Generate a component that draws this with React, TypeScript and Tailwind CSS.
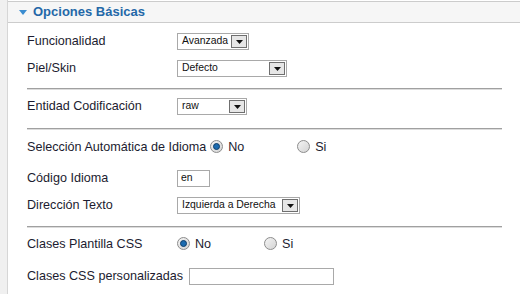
import React from "react";

const font = { fontFamily: '"Liberation Sans", Arial, sans-serif' };

function Select({ value, width }: { value: string; width: number }) {
  return (
    <div
      className="flex items-center justify-between h-[17px] border border-[#a9a9a9] bg-white pl-[4px] pr-[1px]"
      style={{ width }}
    >
      <span className="text-[10.4px] leading-none text-[#111]">{value}</span>
      <div className="w-[16px] h-[13px] border border-[#6f6f6f] bg-[#e6e6e6] flex items-end justify-center pb-[3px]">
        <svg width="7" height="4" viewBox="0 0 7 4">
          <path d="M0 0 H7 L3.5 4 Z" fill="#111" />
        </svg>
      </div>
    </div>
  );
}

function Radio({ checked }: { checked?: boolean }) {
  return (
    <div className="w-[13px] h-[13px] rounded-full border border-[#8c8c8c] bg-gradient-to-br from-[#f4f4f4] to-[#d4d4d4] flex items-center justify-center">
      {checked && (
        <div className="w-[7px] h-[7px] rounded-full bg-[#1c6bb0] border border-[#0e3e6a]" />
      )}
    </div>
  );
}

function RadioOpt({ checked, label }: { checked?: boolean; label: string }) {
  return (
    <div className="flex items-center w-[87px]">
      <Radio checked={checked} />
      <span className="ml-[5px]">{label}</span>
    </div>
  );
}

function Hr() {
  return <div className="ml-[19px] mr-[18px] h-[2px] border-t border-[#a0a0a0] border-b border-b-[#dcdcdc]" />;
}

export default function App() {
  return (
    <div className="flex w-[520px] h-[294px] bg-white text-[12.6px] text-[#1c1c30]" style={font}>
      <div className="w-[8px] h-full bg-[#f0f0f0] border-r border-[#d6d6d6]" />
      <div className="flex-1 flex flex-col">
        <div className="mt-[1px] h-[22px] border-y border-[#cccccc] bg-[#f6f6f6] flex items-center pl-[11px]">
          <svg width="8" height="5" viewBox="0 0 8 5" className="mt-[1px]">
            <path d="M0 0 H8 L4 5 Z" fill="#3a8cd0" />
          </svg>
          <span className="ml-[6px] text-[13px] font-bold text-[#2468a8]">Opciones Básicas</span>
        </div>

        <div className="pl-[19px] mt-[6px] h-[24px] flex items-center">
          <span className="w-[150px]">Funcionalidad</span>
          <Select value="Avanzada" width={72} />
        </div>
        <div className="pl-[19px] mt-[3px] h-[24px] flex items-center">
          <span className="w-[150px]">Piel/Skin</span>
          <Select value="Defecto" width={110} />
        </div>

        <div className="mt-[8px]"><Hr /></div>

        <div className="pl-[19px] mt-[4px] h-[24px] flex items-center">
          <span className="w-[150px]">Entidad Codificación</span>
          <Select value="raw" width={70} />
        </div>

        <div className="mt-[10px]"><Hr /></div>

        <div className="pl-[19px] mt-[5px] h-[24px] flex items-center">
          <span className="mr-[4px]">Selección Automática de Idioma</span>
          <RadioOpt checked label="No" />
          <RadioOpt label="Si" />
        </div>
        <div className="pl-[19px] mt-[7px] h-[24px] flex items-center">
          <span className="w-[150px]">Código Idioma</span>
          <div className="w-[33px] h-[17px] border border-[#a9a9a9] bg-white pl-[3px] flex items-center text-[10.4px] text-[#111]">en</div>
        </div>
        <div className="pl-[19px] mt-[3px] h-[24px] flex items-center">
          <span className="w-[150px]">Dirección Texto</span>
          <Select value="Izquierda a Derecha" width={123} />
        </div>

        <div className="mt-[9px]"><Hr /></div>

        <div className="pl-[19px] mt-[4px] h-[24px] flex items-center">
          <span className="w-[150px]">Clases Plantilla CSS</span>
          <RadioOpt checked label="No" />
          <RadioOpt label="Si" />
        </div>
        <div className="pl-[19px] mt-[8px] h-[24px] flex items-center">
          <span className="mr-[6px]">Clases CSS personalizadas</span>
          <div className="w-[145px] h-[17px] border border-[#a9a9a9] bg-white" />
        </div>
      </div>
    </div>
  );
}
